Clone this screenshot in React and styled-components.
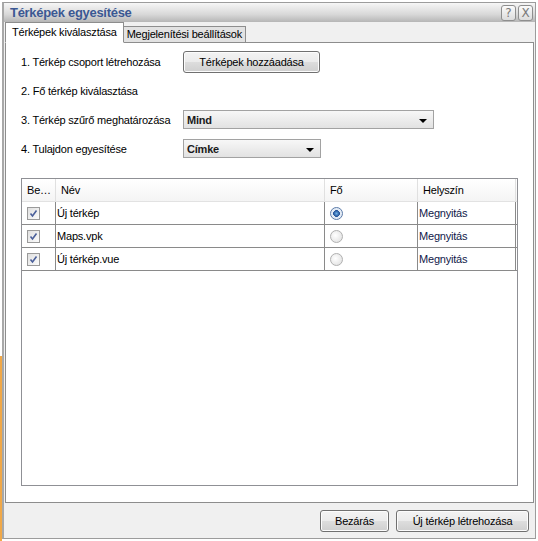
import React, { useState } from "react";
import styled, { createGlobalStyle } from "styled-components";

const GlobalStyle = createGlobalStyle`
  html, body {
    margin: 0;
    padding: 0;
    background: #ffffff;
  }
  body {
    font-family: Tahoma, "Liberation Sans", "DejaVu Sans", sans-serif;
    font-size: 11px;
    letter-spacing: -0.2px;
    color: #000;
  }
`;

const maps = [
  { name: "Új térkép", checked: true, main: true },
  { name: "Maps.vpk", checked: true, main: false },
  { name: "Új térkép.vue", checked: true, main: false },
];

const App = () => {
  const [rows, setRows] = useState(maps);
  const [tab, setTab] = useState(0);

  const toggle = (i) =>
    setRows(rows.map((r, j) => (j === i ? { ...r, checked: !r.checked } : r)));
  const pickMain = (i) => setRows(rows.map((r, j) => ({ ...r, main: j === i })));

  return (
    <Page>
      <GlobalStyle />
      <Backdrop>
        <BackdropTop />
        <BackdropOrange />
      </Backdrop>
      <Window>
        <TitleBar>
          <Title>Térképek egyesítése</Title>
          <TitleButtons>
            <TitleButton>?</TitleButton>
            <TitleButton>X</TitleButton>
          </TitleButtons>
        </TitleBar>
        <Body>
          <TabStrip>
            <Tab active={tab === 0} onClick={() => setTab(0)}>
              Térképek kiválasztása
            </Tab>
            <Tab active={tab === 1} onClick={() => setTab(1)}>
              Megjelenítési beállítások
            </Tab>
          </TabStrip>
          <Panel>
            <Form>
              <Label>1. Térkép csoport létrehozása</Label>
              <div>
                <Button width={137}>Térképek hozzáadása</Button>
              </div>
              <Label>2. Fő térkép kiválasztása</Label>
              <div />
              <Label>3. Térkép szűrő meghatározása</Label>
              <Select width={251}>
                <span>Mind</span>
                <Arrow />
              </Select>
              <Label>4. Tulajdon egyesítése</Label>
              <Select width={138}>
                <span>Címke</span>
                <Arrow />
              </Select>
            </Form>
            <Grid>
              <HeaderRow>
                <HeadCell w={34}>Be…</HeadCell>
                <HeadCell w={269}>Név</HeadCell>
                <HeadCell w={93}>Fő</HeadCell>
                <HeadCell w={98}>Helyszín</HeadCell>
              </HeaderRow>
              {rows.map((r, i) => (
                <Row key={r.name}>
                  <Cell w={34} pad={5}>
                    <Check checked={r.checked} onClick={() => toggle(i)}>
                      {r.checked && (
                        <svg width="9" height="9" viewBox="0 0 9 9">
                          <path
                            d="M1.5 4.5 L3.5 7 L7.5 1.5"
                            fill="none"
                            stroke="#4a5f9a"
                            strokeWidth="1.6"
                          />
                        </svg>
                      )}
                    </Check>
                  </Cell>
                  <Cell w={269}>{r.name}</Cell>
                  <Cell w={93} pad={5}>
                    <Radio selected={r.main} onClick={() => pickMain(i)} />
                  </Cell>
                  <Cell w={98} link>
                    Megnyitás
                  </Cell>
                </Row>
              ))}
            </Grid>
          </Panel>
        </Body>
        <Footer>
          <Button width={69}>Bezárás</Button>
          <Button width={133}>Új térkép létrehozása</Button>
        </Footer>
      </Window>
    </Page>
  );
};

const Page = styled.div`
  display: flex;
  width: 538px;
  height: 541px;
  overflow: hidden;
`;

const Backdrop = styled.div`
  display: flex;
  flex-direction: column;
  width: 2px;
  flex-shrink: 0;
`;

const BackdropTop = styled.div`
  height: 356px;
  background: #ffffff;
`;

const BackdropOrange = styled.div`
  flex: 1;
  background: #f0a848;
`;

const Window = styled.div`
  display: flex;
  flex-direction: column;
  width: 531px;
  height: 535px;
  margin-top: 2px;
  border: 1px solid #9c9c9c;
  border-left: 2px solid #a8a8a8;
  background: #f0f0f0;
`;

const TitleBar = styled.div`
  display: flex;
  align-items: center;
  justify-content: space-between;
  height: 19px;
  padding: 0 2px 0 6px;
  background: linear-gradient(#f6f6f6, #d8d8d8 60%, #b6b6b6);
`;

const Title = styled.div`
  font-family: Tahoma, "Liberation Sans", sans-serif;
  font-weight: bold;
  font-size: 13px;
  letter-spacing: -0.3px;
  color: #3b5893;
`;

const TitleButtons = styled.div`
  display: flex;
  gap: 2px;
`;

const TitleButton = styled.div`
  width: 13px;
  height: 14px;
  border: 1px solid #8e8e8e;
  border-radius: 3px;
  background: linear-gradient(#fbfbfb, #dcdcdc);
  color: #7a7a7a;
  font-family: "DejaVu Sans", sans-serif;
  font-size: 12px;
  letter-spacing: 0;
  line-height: 14px;
  text-align: center;
`;

const Body = styled.div`
  display: flex;
  flex-direction: column;
  flex: 1;
  padding: 1px 1px 0 1px;
`;

const TabStrip = styled.div`
  display: flex;
  align-items: flex-end;
  height: 20px;
  margin-bottom: -1px;
  position: relative;
  z-index: 1;
`;

const Tab = styled.div`
  height: ${(p) => (p.active ? "19px" : "15px")};
  line-height: ${(p) => (p.active ? "18px" : "15px")};
  padding: 0 ${(p) => (p.active ? "6px" : "3px")};
  border: 1px solid #8d8d8d;
  border-bottom: ${(p) => (p.active ? "1px solid #ffffff" : "1px solid #8d8d8d")};
  background: ${(p) => (p.active ? "#ffffff" : "#e2e2e2")};
  font-size: 11px;
  cursor: pointer;
  white-space: nowrap;
  & + & {
    border-left: none;
  }
`;

const Panel = styled.div`
  flex: 1;
  display: flex;
  flex-direction: column;
  background: #ffffff;
  border: 1px solid #8d8d8d;
  padding: 8px 15px 16px 15px;
`;

const Form = styled.div`
  display: grid;
  grid-template-columns: 162px 1fr;
  grid-auto-rows: 21px;
  row-gap: 8px;
  align-items: center;
  margin-bottom: 19px;
`;

const Label = styled.div`
  white-space: nowrap;
`;

const Button = styled.button`
  width: ${(p) => p.width}px;
  height: 22px;
  padding: 0;
  border: 1px solid #707070;
  border-radius: 3px;
  background: linear-gradient(#f3f3f3 0%, #ebebeb 50%, #dddddd 51%, #cfcfcf 100%);
  box-shadow: inset 0 0 0 1px #fcfcfc;
  font-family: Tahoma, "Liberation Sans", sans-serif;
  font-size: 11px;
  letter-spacing: -0.2px;
  color: #000;
  cursor: pointer;
`;

const Select = styled.div`
  display: flex;
  align-items: center;
  justify-content: space-between;
  width: ${(p) => p.width}px;
  height: 19px;
  box-sizing: border-box;
  padding: 0 6px 0 3px;
  border: 1px solid #a2a2a2;
  background: linear-gradient(#f7f7f7, #e2e2e2);
  font-weight: bold;
  color: #1a1a1a;
`;

const Arrow = styled.span`
  width: 0;
  height: 0;
  margin-top: 3px;
  border-left: 4px solid transparent;
  border-right: 4px solid transparent;
  border-top: 4px solid #000;
`;

const Grid = styled.div`
  flex: 1;
  border: 1px solid #8f9095;
  display: flex;
  flex-direction: column;
`;

const HeaderRow = styled.div`
  display: flex;
  height: 22px;
  background: linear-gradient(#ffffff, #f4f4f4);
  border-bottom: 1px solid #e2e2e2;
`;

const HeadCell = styled.div`
  width: ${(p) => p.w}px;
  flex-shrink: 0;
  box-sizing: border-box;
  padding-left: 5px;
  line-height: 22px;
  border-right: 1px solid #e0e0e0;
`;

const Row = styled.div`
  display: flex;
  height: 22px;
  & + & {
    border-top: 1px solid #8a8a8a;
  }
  &:last-child {
    border-bottom: 1px solid #8a8a8a;
  }
`;

const Cell = styled.div`
  width: ${(p) => p.w}px;
  flex-shrink: 0;
  box-sizing: border-box;
  display: flex;
  align-items: center;
  padding-left: ${(p) => p.pad || 1}px;
  border-right: 1px solid #8a8a8a;
  color: ${(p) => (p.link ? "#10184a" : "#000")};
`;

const Check = styled.div`
  width: 11px;
  height: 11px;
  border: 1px solid #9a9a9a;
  background: linear-gradient(135deg, #e0e0e0, #fbfbfb);
  display: flex;
  align-items: center;
  justify-content: center;
  cursor: pointer;
`;

const Radio = styled.div`
  width: 11px;
  height: 11px;
  border-radius: 50%;
  border: 1px solid ${(p) => (p.selected ? "#5a7aa8" : "#b0b0b0")};
  background: ${(p) =>
    p.selected
      ? "radial-gradient(circle, #6fb0e8 0%, #1f4f96 40%, #dfe8f4 45%, #eef3f9 100%)"
      : "radial-gradient(circle at 40% 40%, #ffffff, #dcdcdc)"};
  cursor: pointer;
`;

const Footer = styled.div`
  display: flex;
  justify-content: flex-end;
  align-items: center;
  gap: 7px;
  height: 35px;
  padding-right: 6px;
`;

export default App;
